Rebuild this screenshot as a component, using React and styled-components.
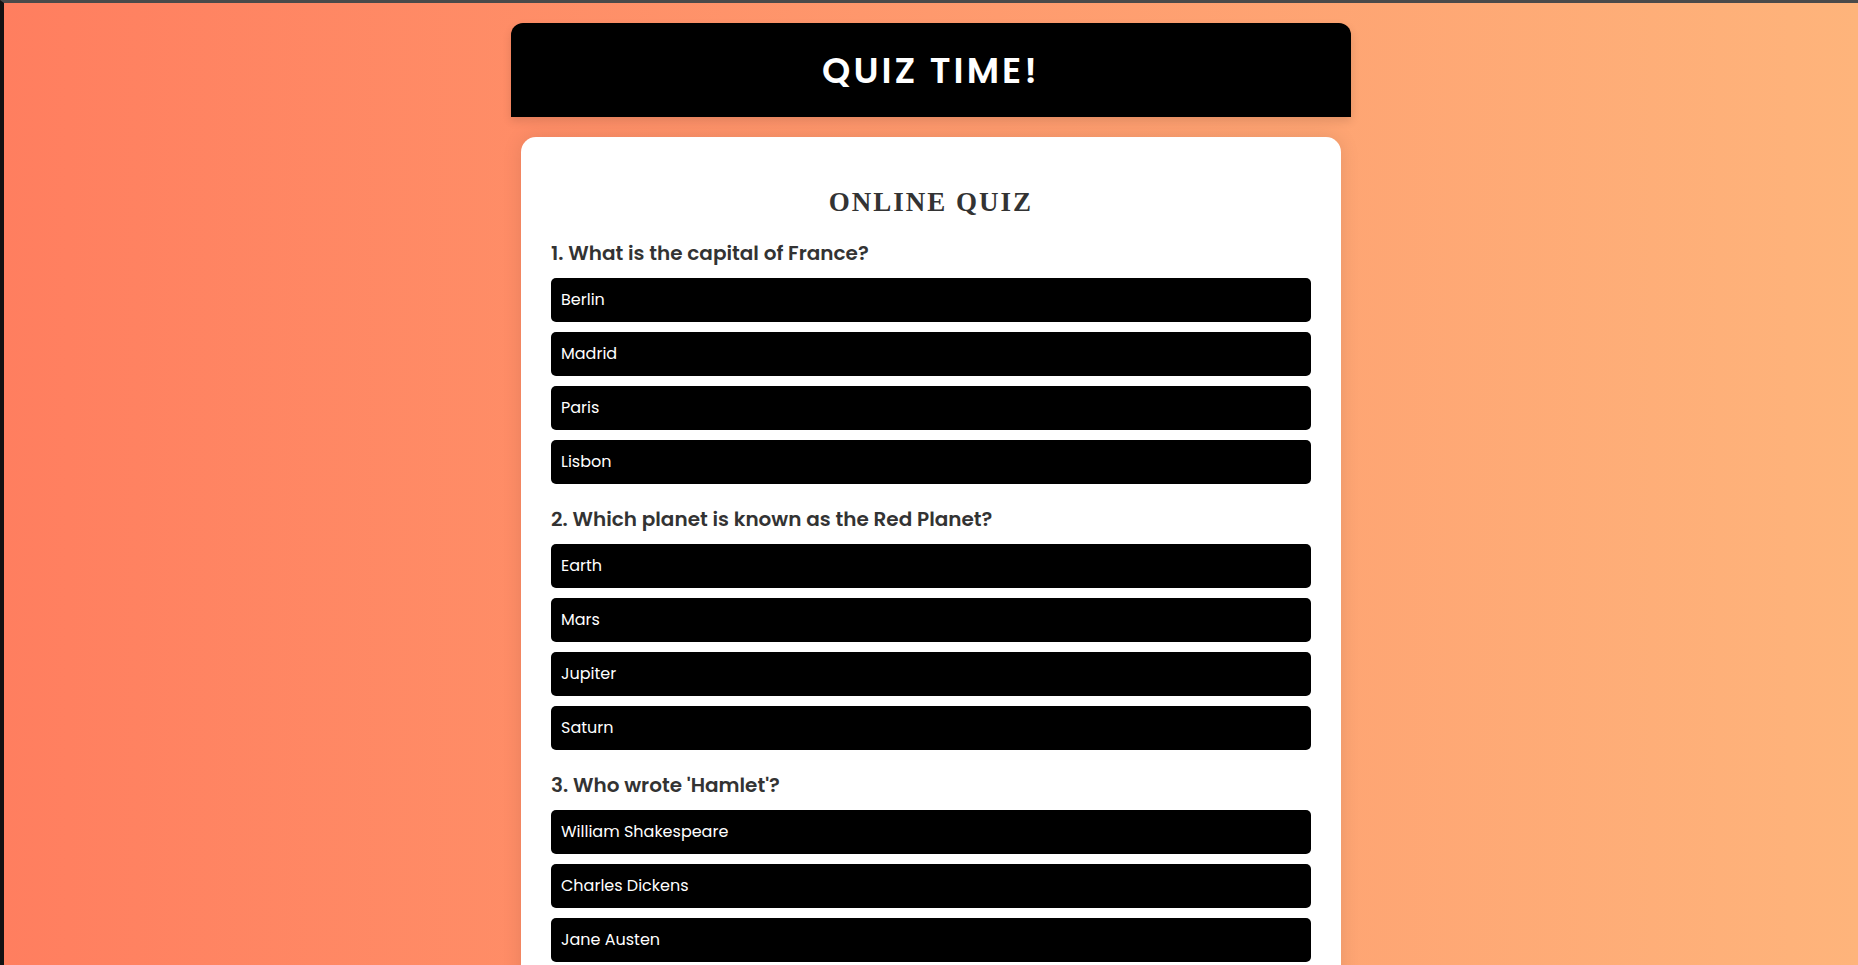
import React from "react";
import styled, { createGlobalStyle } from "styled-components";

const GlobalStyle = createGlobalStyle`
  html { background: linear-gradient(to right, #ff7e5f, #feb47b); min-height: 100%; }
  body {
    margin: 0;
    min-height: 100vh;
    border-left: 4px solid #121212;
    border-top: 3px solid #4a4a4a;
    background: linear-gradient(to right, #ff7e5f, #feb47b);
    background-attachment: fixed;
    font-family: "Poppins", "Open Sans", "Noto Sans", sans-serif;
  }
  ::-webkit-scrollbar { width: 4px; }
  ::-webkit-scrollbar-track { background: transparent; }
  ::-webkit-scrollbar-thumb { background: #777; }
`;

const Page = styled.div`
  display: flex;
  flex-direction: column;
  align-items: center;
  padding: 20px 0 40px;
`;

const Header = styled.header`
  width: 840px;
  box-sizing: border-box;
  background: #000;
  border-radius: 12px 12px 0 0;
  height: 94px;
  display: flex;
  align-items: center;
  justify-content: center;
  box-shadow: 0 4px 10px rgba(0, 0, 0, 0.12);
`;

const Title = styled.h1`
  margin: 0;
  color: #fff;
  font-size: 36px;
  font-weight: 600;
  letter-spacing: 3px;
`;

const Card = styled.main`
  margin-top: 20px;
  width: 820px;
  box-sizing: border-box;
  background: #fff;
  border-radius: 15px;
  padding: 30px;
  box-shadow: 0 0 20px rgba(0, 0, 0, 0.1);
`;

const QuizHeading = styled.h2`
  margin: 18px 0 20px;
  text-align: center;
  font-family: "Liberation Serif", "Times New Roman", serif;
  font-size: 27px;
  line-height: 34px;
  font-weight: 700;
  letter-spacing: 2px;
  color: #333;
`;

const Question = styled.section`
  margin-bottom: 21px;
`;

const QuestionText = styled.h3`
  margin: 0 0 11px;
  font-size: 20px;
  line-height: 28px;
  font-weight: 600;
  color: #333;
`;

const Options = styled.div`
  display: flex;
  flex-direction: column;
  gap: 10px;
`;

const Option = styled.button`
  display: block;
  width: 100%;
  text-align: left;
  background: #000;
  color: #fff;
  border: none;
  border-radius: 5px;
  padding: 10px;
  font-family: inherit;
  font-size: 16px;
  line-height: 24px;
  cursor: pointer;
`;

const Submit = styled.button`
  display: block;
  margin: 10px auto 0;
  background: #000;
  color: #fff;
  border: none;
  border-radius: 5px;
  padding: 12px 30px;
  font-family: inherit;
  font-size: 16px;
  cursor: pointer;
`;

const questions = [
  { q: "What is the capital of France?", a: ["Berlin", "Madrid", "Paris", "Lisbon"] },
  { q: "Which planet is known as the Red Planet?", a: ["Earth", "Mars", "Jupiter", "Saturn"] },
  { q: "Who wrote 'Hamlet'?", a: ["William Shakespeare", "Charles Dickens", "Jane Austen", "Mark Twain"] },
  { q: "What is the largest ocean on Earth?", a: ["Atlantic Ocean", "Indian Ocean", "Arctic Ocean", "Pacific Ocean"] },
  { q: "What is the chemical symbol for water?", a: ["H2O", "CO2", "O2", "NaCl"] },
  { q: "How many continents are there?", a: ["5", "6", "7", "8"] },
];

export default function App() {
  return (
    <>
      <GlobalStyle />
      <Page>
        <Header>
          <Title>QUIZ TIME!</Title>
        </Header>
        <Card>
          <QuizHeading>ONLINE QUIZ</QuizHeading>
          {questions.map((item, i) => (
            <Question key={i}>
              <QuestionText>
                {i + 1}. {item.q}
              </QuestionText>
              <Options>
                {item.a.map((opt) => (
                  <Option key={opt}>{opt}</Option>
                ))}
              </Options>
            </Question>
          ))}
          <Submit>Submit</Submit>
        </Card>
      </Page>
    </>
  );
}
